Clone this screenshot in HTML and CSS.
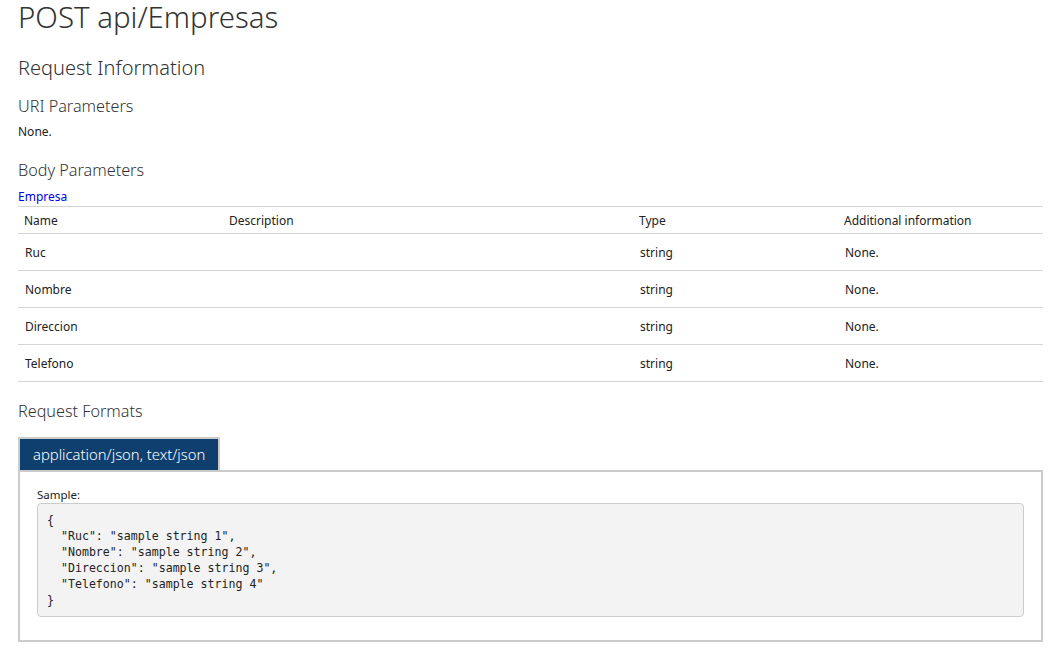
FILE: index.html
```html
<!DOCTYPE html>
<html lang="es">
<head>
<meta charset="utf-8">
<title>POST api/Empresas</title>
<link rel="stylesheet" href="styles.css">
</head>
<body>
<main class="page">
  <h1 class="title">POST api/Empresas</h1>
  <h2 class="section">Request Information</h2>
  <h3 class="sub sub-uri">URI Parameters</h3>
  <p class="none">None.</p>
  <h3 class="sub sub-body">Body Parameters</h3>
  <p class="model"><a href="#" class="link">Empresa</a></p>
  <table class="params">
    <colgroup>
      <col class="c-name"><col class="c-desc"><col class="c-type"><col class="c-info">
    </colgroup>
    <thead>
      <tr><th>Name</th><th>Description</th><th>Type</th><th>Additional information</th></tr>
    </thead>
    <tbody>
      <tr><td>Ruc</td><td></td><td>string</td><td>None.</td></tr>
      <tr><td>Nombre</td><td></td><td>string</td><td>None.</td></tr>
      <tr><td>Direccion</td><td></td><td>string</td><td>None.</td></tr>
      <tr><td>Telefono</td><td></td><td>string</td><td>None.</td></tr>
    </tbody>
  </table>
  <h3 class="sub sub-formats">Request Formats</h3>
  <div class="tabs">
    <span class="tab">application/json, text/json</span>
  </div>
  <div class="sample-box">
    <div class="sample-label">Sample:</div>
    <pre class="code">{
  "Ruc": "sample string 1",
  "Nombre": "sample string 2",
  "Direccion": "sample string 3",
  "Telefono": "sample string 4"
}</pre>
  </div>
</main>
</body>
</html>
```
FILE: styles.css
```css
html, body {
  margin: 0;
  padding: 0;
  background: #fff;
}
body {
  font-family: "Noto Sans", "Open Sans", sans-serif;
  color: #222;
}
.page {
  padding: 1px 9px 0 18px;
}
.title {
  margin: 0;
  font-size: 29.4px;
  line-height: 32px;
  font-weight: 300;
  color: #333;
}
.section {
  margin: 22px 0 0;
  font-size: 20px;
  line-height: 26px;
  font-weight: 300;
  color: #333;
}
.sub {
  margin: 0;
  font-size: 16.2px;
  line-height: 22px;
  font-weight: 300;
  color: #333;
}
.sub-uri { margin-top: 14px; }
.sub-body { margin-top: 18px; }
.sub-formats { margin-top: 18px; }
.none {
  margin: 6px 0 0;
  font-size: 12px;
  line-height: 18px;
}
.model {
  margin: 7px 0 0;
  font-size: 12px;
  line-height: 18px;
}
.link {
  color: #0000ee;
  text-decoration: none;
}
.params {
  width: 100%;
  border-collapse: collapse;
  table-layout: fixed;
  font-size: 12px;
  border-top: 1px solid #d4d4d4;
}
.c-name { width: 20%; }
.c-desc { width: 40%; }
.c-type { width: 20%; }
.c-info { width: 20%; }
.params th {
  text-align: left;
  font-weight: 400;
  height: 26px;
  padding: 0 6px;
  border-bottom: 1px solid #d4d4d4;
  vertical-align: middle;
}
.params td {
  height: 36px;
  padding: 0 7px;
  border-bottom: 1px solid #d4d4d4;
  vertical-align: middle;
}
.tabs {
  display: flex;
  margin-top: 15px;
}
.tab {
  display: block;
  border: 2px solid #cccccc;
  border-bottom: 0;
  background: #0f3f6f;
  color: #fff;
  font-size: 14.8px;
  font-weight: 300;
  height: 31px;
  line-height: 31px;
  padding: 0 13px;
}
.sample-box {
  border: 2px solid #cccccc;
  padding: 14px 17px 23px;
}
.sample-label {
  font-size: 11.5px;
  line-height: 17px;
}
.code {
  margin: 0;
  padding: 8px 9px;
  font-family: "DejaVu Sans Mono", "Liberation Mono", monospace;
  font-size: 11.6px;
  line-height: 16px;
  color: #222;
  background: #f3f3f3;
  border: 1px solid #cccccc;
  border-radius: 4px;
}
```
